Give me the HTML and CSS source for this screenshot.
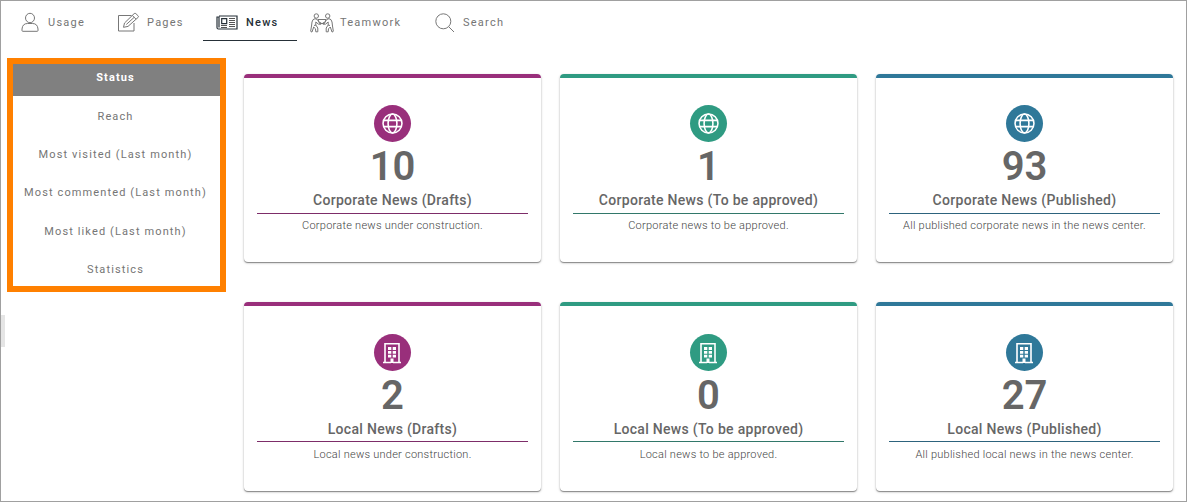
FILE: index.html
```html
<!DOCTYPE html>
<html lang="en">
<head>
<meta charset="utf-8">
<title>News status</title>
<link rel="stylesheet" href="styles.css">
</head>
<body>
<svg class="defs" width="0" height="0">
  <symbol id="globe" viewBox="0 0 20 20"><g fill="none" stroke="#fff" stroke-width="1.5"><circle cx="10" cy="10" r="9"/><ellipse cx="10" cy="10" rx="4.2" ry="9"/><path d="M1.6 7h16.8M1.6 13h16.8"/></g></symbol>
  <symbol id="building" viewBox="0 0 20 22"><g fill="none" stroke="#fff" stroke-width="1.6"><path d="M3 20.5V1.8h14v18.700M1 20.500h8M11 20.500h8"/></g><path fill="#fff" d="M6 5h3.300v2.900H6zM10.700 5h3.300v2.900h-3.300zM6 8.900h3.300v2.900H6zM10.700 8.900h3.300v2.900h-3.300zM6 12.800h3.300v2.700H6zM10.700 12.800h3.300v2.700h-3.300zM8.500 16.500h3V21h-3z"/></symbol>
</svg>
<div class="page">
  <nav class="tabs">
    <a class="tab usage"><svg width="20" height="21" viewBox="0 0 20 21"><g class="thin"><ellipse cx="9" cy="6" rx="4.500" ry="4.700"/><path d="M6.500 11.500h5q5 0 5.500 5.500v1.500q0 .8-.8.800H1.800Q1 19.300 1 18.500V17q.5-5.500 5.500-5.500z"/></g></svg><span>Usage</span></a>
    <a class="tab pages"><svg width="23" height="21" viewBox="0 0 23 21"><g class="thin"><path d="M14.500 3.500H1.500v15.500h15.500V11"/><path d="M6.500 15.300l1-4.300L17.200 1.600q.8-.7 1.600 0l2.300 2.200q.8.800 0 1.600L11 14.400z M15.300 3.500l3.800 3.700M9.300 12.500L17.200 5.300"/></g></svg><span>Pages</span></a>
    <a class="tab news active"><svg width="22" height="15" viewBox="0 0 22 15"><g fill="none" stroke="#263038" stroke-width="1.200"><path d="M3 1h18v13H2.500Q1 14 1 12.500V2h2v10.500"/><path d="M5.700 3.700h5v5h-5z"/></g><path stroke="#555" d="M13 3.500h6M13 5.500h6M13 7.500h6M13 9.500h6M5 10.500h6M5 12.500h6M13 11.500h6"/></svg><span>News</span></a>
    <a class="tab team"><svg width="24" height="20" viewBox="0 0 24 20"><g class="thin"><g id="mover"><circle cx="6.300" cy="3" r="2.200"/><path d="M5 5.700Q2.500 6 2 9l-.5 4L.7 18q0 1 1.300 1l1.700-5 1.800 1.800.3 3h2V15L5.800 12V9l2.700 2.200h2.500l-.3-1.700H9.500L7 6.300zM4 12.500l2-.5"/></g><use href="#mover" transform="matrix(-1 0 0 1 24 0)"/><path d="M8 6.500h8l-1.500 4h-5z"/></g></svg><span>Teamwork</span></a>
    <a class="tab search"><svg width="20" height="20" viewBox="0 0 20 20"><g class="thin"><circle cx="8.300" cy="8.300" r="7.500"/><path d="M13.700 13.700l5.300 5.300"/></g></svg><span>Search</span></a>
  </nav>
  <main class="content">
    <aside class="menu">
      <a class="item selected">Status</a><a class="item">Reach</a><a class="item">Most visited (Last month)</a><a class="item">Most commented (Last month)</a><a class="item">Most liked (Last month)</a><a class="item">Statistics</a>
    </aside>
    <section class="cards">
      <article class="card purple"><div class="badge"><svg class="globe"><use href="#globe"/></svg></div><div class="number">10</div><h2>Corporate News (Drafts)</h2><p>Corporate news under construction.</p></article>
      <article class="card green"><div class="badge"><svg class="globe"><use href="#globe"/></svg></div><div class="number">1</div><h2>Corporate News (To be approved)</h2><p>Corporate news to be approved.</p></article>
      <article class="card blue"><div class="badge"><svg class="globe"><use href="#globe"/></svg></div><div class="number">93</div><h2>Corporate News (Published)</h2><p>All published corporate news in the news center.</p></article>
      <article class="card local purple"><div class="badge"><svg class="building"><use href="#building"/></svg></div><div class="number">2</div><h2>Local News (Drafts)</h2><p>Local news under construction.</p></article>
      <article class="card local green"><div class="badge"><svg class="building"><use href="#building"/></svg></div><div class="number">0</div><h2>Local News (To be approved)</h2><p>Local news to be approved.</p></article>
      <article class="card local blue"><div class="badge"><svg class="building"><use href="#building"/></svg></div><div class="number">27</div><h2>Local News (Published)</h2><p>All published local news in the news center.</p></article>
    </section>
  </main>
  <div class="handle"></div>
</div>
</body>
</html>
```
FILE: styles.css
```css
* { box-sizing: border-box; }
body { margin: 0; font-family: Roboto, sans-serif; background: #fff; overflow: hidden; }
.defs { position: absolute; }
.page { position: relative; width: 1187px; height: 502px; border: 1px solid #a0a0a0; }
.tabs { display: flex; height: 40px; padding-left: 10px; }
.tab { display: flex; align-items: center; padding: 3px 10px 0; font-size: 11px; letter-spacing: 1.25px; color: #757575; }
.tab svg { flex: none; }
.tab.usage { width: 96px; }
.tab.usage span { margin-left: 7px; }
.tab.pages { width: 96px; }
.tab.pages span { margin-left: 7px; }
.tab.news { width: 94px; padding-left: 13px; }
.tab.news span { margin-left: 8px; }
.tab.team { width: 128px; padding-left: 13px; }
.tab.team span { margin-left: 6px; }
.tab.search span { margin-left: 8px; }
.tab.active { color: #263038; font-weight: 500; border-bottom: 1px solid #263038; }
.thin { fill: none; stroke: #777; stroke-width: 1; }
.content { display: flex; align-items: flex-start; padding: 17px 13px 0 6px; gap: 18px; }
.menu { width: 219px; height: 234px; border: 6px solid #ff8000; }
.item { display: flex; height: 38.3px; align-items: center; justify-content: center; font-size: 11px; letter-spacing: 1.12px; color: #757575; padding: 2px 2px 0 0; }
.item.selected { height: 32px; background: #808080; color: #fff; font-weight: 700; padding: 0 2px 5px 0; }
.cards { display: grid; grid-template-columns: repeat(3, 297px); gap: 40px 19px; padding-top: 16px; }
.card { height: 188px; border-top: 4px solid; border-radius: 4px; padding: 27px 13px 0; text-align: center; box-shadow: 0 1px 1px rgba(0,0,0,.38), 0 1px 3px rgba(0,0,0,.2); }
.card.local { height: 189px; padding-top: 28px; }
.purple { border-color: #992f7b; --accent: #992f7b; --rule: #7d2d69; }
.green { border-color: #2f9b82; --accent: #2f9b82; --rule: #32786a; }
.blue { border-color: #2f7899; --accent: #2f7899; --rule: #2d637d; }
.badge { display: flex; align-items: center; justify-content: center; width: 37px; height: 37px; margin: 0 auto; border-radius: 50%; background: var(--accent); }
.globe { width: 21px; height: 21px; }
.building { width: 20px; height: 22px; margin-right: 1px; }
.number { height: 48px; font-size: 40px; font-weight: 600; line-height: 50px; color: #666; }
h2 { margin: 0; height: 24px; font-size: 14px; font-weight: 500; line-height: 21px; letter-spacing: .3px; color: #666; border-bottom: 1px solid var(--rule); }
.local h2 { height: 23px; }
.local p { line-height: 25px; }
p { margin: 0; font-size: 11px; font-weight: 300; line-height: 23px; letter-spacing: .25px; color: #444; }
.handle { position: absolute; left: 0; top: 314px; width: 4px; height: 32px; background: #e5e5e5; }
```
